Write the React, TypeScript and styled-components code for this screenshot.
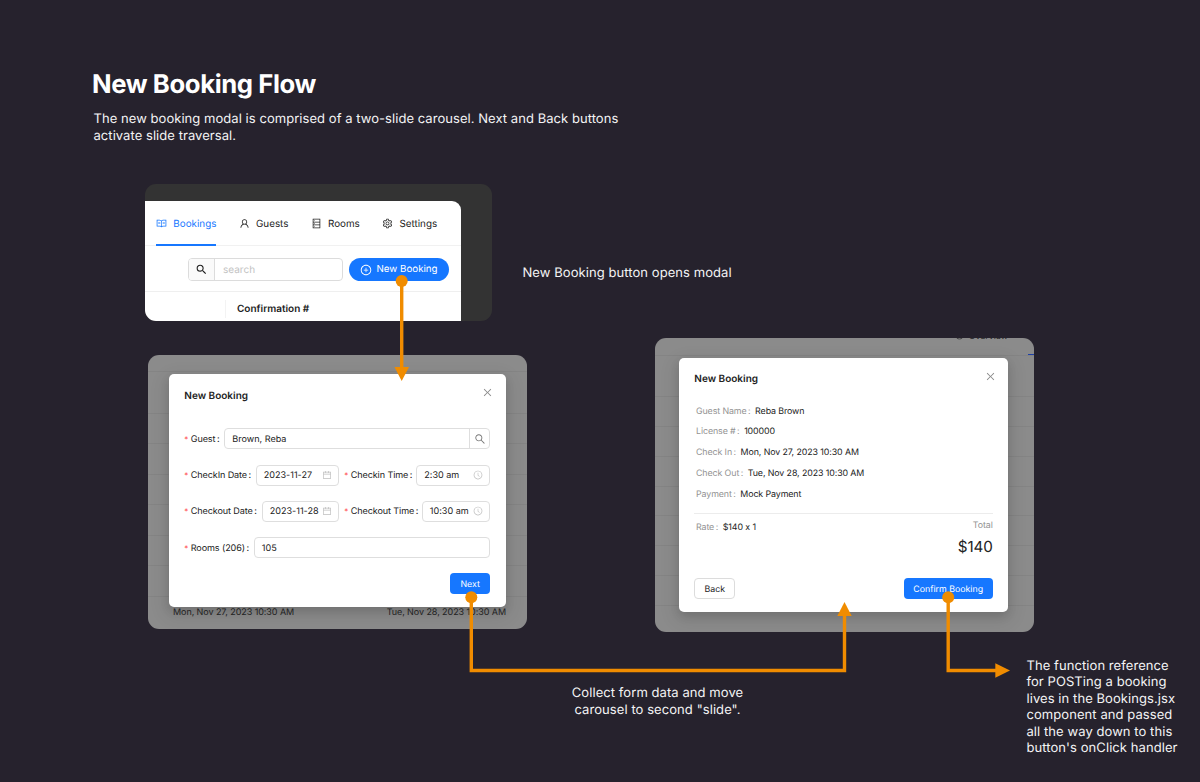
import React from "react";
import styled, { createGlobalStyle, css } from "styled-components";
import {
  AiOutlineRead,
  AiOutlineUser,
  AiOutlineDatabase,
  AiOutlineSetting,
  AiOutlinePlusCircle,
  AiOutlineSearch,
  AiOutlineClose,
  AiOutlineCalendar,
  AiOutlineClockCircle,
  AiOutlineEye,
} from "react-icons/ai";
import { MdSearch } from "react-icons/md";

const blue = "#1677ff";
const orange = "#f08c00";

const GlobalStyle = createGlobalStyle`
  body {
    margin: 0;
    background: #26222d;
    font-family: Inter, "Liberation Sans", sans-serif;
    font-feature-settings: "calt" 0;
    text-rendering: geometricPrecision;
  }
  * { box-sizing: border-box; }
  button { text-rendering: inherit; }
  svg { display: block; flex: none; }
`;

const Canvas = styled.main`
  position: relative;
  width: 1200px;
  height: 782px;
  overflow: hidden;
  background: #26222d;
  color: #fff;
`;

const Header = styled.header`
  padding: 67px 0 0 92px;
`;

const Title = styled.h1`
  margin: 0;
  font-size: 25.7px;
  line-height: 36px;
  font-weight: 700;
  letter-spacing: -0.4px;
`;

const Intro = styled.p`
  margin: 8px 0 0 1.5px;
  width: 540px;
  font-size: 13px;
  line-height: 16.5px;
  letter-spacing: 0.05px;
  color: #f4f4f5;
`;

/* Nodes placed on the flow board */
const Node = styled.section<{ $x: number; $y: number; $w: number; $h: number }>`
  position: absolute;
  left: ${(p) => p.$x}px;
  top: ${(p) => p.$y}px;
  width: ${(p) => p.$w}px;
  height: ${(p) => p.$h}px;
  border-radius: 11px;
  overflow: hidden;
`;

const Note = styled.p<{ $x: number; $y: number; $w: number; $center?: boolean }>`
  position: absolute;
  left: ${(p) => p.$x}px;
  top: ${(p) => p.$y}px;
  width: ${(p) => p.$w}px;
  margin: 0;
  font-size: 13px;
  line-height: 16.5px;
  letter-spacing: 0.07px;
  color: #f4f4f5;
  white-space: pre-line;
  text-align: ${(p) => (p.$center ? "center" : "left")};
`;

/* Toolbar node */
const ToolbarNode = styled(Node)`
  background: #333;
  padding-top: 17px;
`;

const Sheet = styled.div`
  width: 315.5px;
  height: 120px;
  background: #fff;
  border-top-right-radius: 9px;
  color: #222;
`;

const Tabs = styled.nav`
  display: flex;
  height: 45px;
  padding-left: 11px;
  gap: 22.3px;
  border-bottom: 1px solid #f1f1f1;
`;

const Tab = styled.div<{ $active?: boolean }>`
  display: flex;
  align-items: center;
  height: 45px;
  padding-top: 2px;
  gap: 6.3px;
  font-size: 9.85px;
  white-space: nowrap;
  color: ${(p) => (p.$active ? blue : "#222")};
  border-bottom: 2px solid ${(p) => (p.$active ? blue : "transparent")};
`;

const ActionBar = styled.div`
  display: flex;
  align-items: center;
  justify-content: flex-end;
  height: 46px;
  padding: 2px 11.5px 0 0;
  gap: 6px;
  border-bottom: 1px solid #efefef;
`;

const SearchBox = styled.div`
  display: flex;
  width: 155px;
  height: 23px;
  border: 1px solid #dcdcdc;
  border-radius: 4px;
  overflow: hidden;
  font-size: 10px;
  color: #c3c3c3;
`;

const SearchAddon = styled.span`
  display: flex;
  align-items: center;
  justify-content: center;
  width: 26px;
  background: #fafafa;
  border-right: 1px solid #dcdcdc;
  color: #222;
`;

const SearchHint = styled.span`
  padding-left: 8px;
  line-height: 22px;
`;

const PillButton = styled.button`
  display: flex;
  align-items: center;
  gap: 4.5px;
  width: 100px;
  height: 23px;
  padding: 0 0 0 11px;
  border: 0;
  border-radius: 12px;
  background: ${blue};
  color: #fff;
  font: 400 9.75px Inter, sans-serif;
  white-space: nowrap;
`;

const TableHead = styled.div`
  display: flex;
  height: 29px;
  align-items: center;
  padding-left: 80px;
  font-size: 10px;
  font-weight: 600;
`;

const HeadCell = styled.span`
  margin-top: 4.2px;
  padding-left: 11px;
  line-height: 18px;
  border-left: 1px solid #f3f3f3;
`;

/* Dimmed page seen behind each modal */
const Backdrop = styled(Node)`
  background: #8b8b8b;
  color: #262626;
`;

const DimRows = styled.div`
  display: flex;
  flex-direction: column;
`;

const DimRow = styled.div<{ $h: number }>`
  display: flex;
  justify-content: space-between;
  height: ${(p) => p.$h}px;
  border-bottom: 1px solid #848484;
`;

const DimFooter = styled.div`
  display: flex;
  justify-content: space-between;
  padding: 9.5px 21px 0 25px;
  font-size: 9px;
  line-height: 12px;
  letter-spacing: -0.07px;
`;

const DimNav = styled.div`
  display: flex;
  justify-content: flex-end;
  align-items: center;
  gap: 5px;
  width: 353px;
  height: 12px;
  margin-top: -8px;
  font-size: 8.8px;
  line-height: 12px;
`;

const DimNavText = styled.span`
  padding-top: 2px;
`;

const DimMarker = styled.i`
  align-self: flex-end;
  width: 6px;
  height: 1px;
  margin-left: auto;
  background: #1d3fa8;
`;

const Dialog = styled.div<{ $x: number; $y: number; $w: number; $h: number; $font: number; $track: number }>`
  position: absolute;
  left: ${(p) => p.$x}px;
  top: ${(p) => p.$y}px;
  width: ${(p) => p.$w}px;
  height: ${(p) => p.$h}px;
  display: flex;
  flex-direction: column;
  padding: 13px 15.3px 0;
  border-radius: 5px;
  background: #fff;
  color: #222;
  font-size: ${(p) => p.$font}px;
  letter-spacing: ${(p) => p.$track}px;
  box-shadow: 0 4px 10px rgba(0, 0, 0, 0.12), 0 6px 18px 4px rgba(0, 0, 0, 0.08);
`;

const DialogHead = styled.div`
  display: flex;
  justify-content: space-between;
  height: 16px;
  margin-right: -3px;
  color: #8a8a8a;
`;

const DialogTitle = styled.h2<{ $line: number }>`
  margin: 0;
  font-size: 10px;
  line-height: ${(p) => p.$line}px;
  font-weight: 600;
  letter-spacing: 0;
  color: #222;
`;

const Form = styled.div`
  display: flex;
  flex-direction: column;
  gap: 15.3px;
  margin-top: 25.3px;
`;

const FormRow = styled.div`
  display: flex;
  align-items: center;
  height: 21px;
`;

const Label = styled.label<{ $w: number }>`
  flex: none;
  width: ${(p) => p.$w}px;
  line-height: 12px;
  padding-top: 1px;
  white-space: nowrap;
  letter-spacing: -0.1px;
  &::before {
    content: "*";
    color: #ff4d4f;
    margin-right: 2.5px;
    font-size: 8px;
  }
`;

const Colon = styled.span`
  margin-left: 1.5px;
`;

const Field = styled.div<{ $w?: number }>`
  display: flex;
  align-items: center;
  justify-content: space-between;
  flex: ${(p) => (p.$w ? "none" : 1)};
  width: ${(p) => (p.$w ? `${p.$w}px` : "auto")};
  height: 21px;
  padding-left: 7px;
  padding-right: 6.5px;
  border: 1px solid #dedede;
  border-radius: 4px;
  white-space: nowrap;
  color: #222;
  svg { color: #bfbfbf; }
`;

const FieldValue = styled.span`
  line-height: 12px;
  padding-top: 1.8px;
`;

const SearchButton = styled.span`
  display: flex;
  align-items: center;
  justify-content: center;
  width: 20px;
  height: 19px;
  margin-right: -6.5px;
  border-left: 1px solid #dedede;
  svg { color: #777; }
`;

const Spacer = styled.span`
  width: 5px;
  flex: none;
`;

const Footer = styled.div<{ $top: number }>`
  display: flex;
  justify-content: space-between;
  margin-top: ${(p) => p.$top}px;
`;

const Button = styled.button<{ $primary?: boolean; $w: number }>`
  width: ${(p) => p.$w}px;
  height: 21px;
  padding: 1px 0 0;
  border-radius: 4px;
  font: 400 8.8px Inter, sans-serif;
  ${(p) =>
    p.$primary
      ? css`
          margin-left: auto;
          border: 0;
          background: ${blue};
          color: #fff;
        `
      : css`
          border: 1px solid #dcdcdc;
          background: #fff;
          color: #222;
        `}
`;

const Details = styled.dl`
  display: flex;
  flex-direction: column;
  margin: 13.5px 0 0;
  padding-left: 1.7px;
`;

const Detail = styled.div`
  display: flex;
  gap: 4.6px;
  height: 20.9px;
  line-height: 21px;
  white-space: nowrap;
`;

const Term = styled.dt`
  color: #929292;
`;

const Value = styled.dd`
  margin: 0;
`;

const Summary = styled.div`
  display: flex;
  justify-content: space-between;
  margin-top: 8px;
  padding: 3px 0 0 1.7px;
  border-top: 1px solid #ececec;
`;

const Total = styled.div`
  display: flex;
  flex-direction: column;
  align-items: flex-end;
  color: #929292;
  line-height: 18px;
`;

const Amount = styled.strong`
  font-size: 15.2px;
  line-height: 24px;
  font-weight: 400;
  color: #222;
`;

const Connectors = styled.svg`
  position: absolute;
  inset: 0;
`;

function DimTable({ rows }: { rows: number[] }) {
  return (
    <DimRows>
      {rows.map((h, i) => (
        <DimRow key={i} $h={h} />
      ))}
    </DimRows>
  );
}

const details: [string, string][] = [
  ["Guest Name", "Reba Brown"],
  ["License #", "100000"],
  ["Check In", "Mon, Nov 27, 2023 10:30 AM"],
  ["Check Out", "Tue, Nov 28, 2023 10:30 AM"],
  ["Payment", "Mock Payment"],
];

export default function App() {
  return (
    <Canvas>
      <GlobalStyle />
      <Header>
        <Title>New Booking Flow</Title>
        <Intro>
          The new booking modal is comprised of a two-slide carousel. Next and Back buttons
          activate slide traversal.
        </Intro>
      </Header>

      <ToolbarNode $x={145} $y={184} $w={347} $h={137}>
        <Sheet>
          <Tabs>
            <Tab $active><AiOutlineRead size={11} />Bookings</Tab>
            <Tab><AiOutlineUser size={11} />Guests</Tab>
            <Tab><AiOutlineDatabase size={11} />Rooms</Tab>
            <Tab><AiOutlineSetting size={11} />Settings</Tab>
          </Tabs>
          <ActionBar>
            <SearchBox>
              <SearchAddon><MdSearch size={13} /></SearchAddon>
              <SearchHint>search</SearchHint>
            </SearchBox>
            <PillButton><AiOutlinePlusCircle size={12} />New Booking</PillButton>
          </ActionBar>
          <TableHead><HeadCell>Confirmation #</HeadCell></TableHead>
        </Sheet>
      </ToolbarNode>

      <Note $x={522.5} $y={265} $w={260}>New Booking button opens modal</Note>

      <Backdrop $x={148} $y={355} $w={379} $h={274}>
        <DimTable rows={[17, 42, 30, 31, 30, 31, 30, 31]} />
        <DimFooter>
          <span>Mon, Nov 27, 2023 10:30 AM</span>
          <span>Tue, Nov 28, 2023 10:30 AM</span>
        </DimFooter>
        <Dialog $x={21} $y={19} $w={336.5} $h={233} $font={9.07} $track={0}>
          <DialogHead>
            <DialogTitle $line={18}>New Booking</DialogTitle>
            <AiOutlineClose size={11} />
          </DialogHead>
          <Form>
            <FormRow>
              <Label $w={40}>Guest<Colon>:</Colon></Label>
              <Field>
                <FieldValue>Brown, Reba</FieldValue>
                <SearchButton><AiOutlineSearch size={12} /></SearchButton>
              </Field>
            </FormRow>
            <FormRow>
              <Label $w={71.4}>CheckIn Date<Colon>:</Colon></Label>
              <Field $w={83.6}><FieldValue>2023-11-27</FieldValue><AiOutlineCalendar size={10} /></Field>
              <Spacer />
              <Label $w={72}>Checkin Time<Colon>:</Colon></Label>
              <Field><FieldValue>2:30 am</FieldValue><AiOutlineClockCircle size={10} /></Field>
            </FormRow>
            <FormRow>
              <Label $w={77.4}>Checkout Date<Colon>:</Colon></Label>
              <Field $w={77.6}><FieldValue>2023-11-28</FieldValue><AiOutlineCalendar size={10} /></Field>
              <Spacer />
              <Label $w={77.5}>Checkout Time<Colon>:</Colon></Label>
              <Field><FieldValue>10:30 am</FieldValue><AiOutlineClockCircle size={10} /></Field>
            </FormRow>
            <FormRow>
              <Label $w={69.5}>Rooms (206)<Colon>:</Colon></Label>
              <Field><FieldValue>105</FieldValue></Field>
            </FormRow>
          </Form>
          <Footer $top={15}>
            <Button $primary $w={40}>Next</Button>
          </Footer>
        </Dialog>
      </Backdrop>

      <Backdrop $x={655} $y={338} $w={379} $h={294}>
        <DimNav><AiOutlineEye size={9} /><DimNavText>Overview</DimNavText></DimNav>
        <DimRow $h={14}><DimMarker /></DimRow>
        <DimTable rows={[41, 30, 30, 30, 29, 30, 30, 30]} />
        <Dialog $x={24} $y={20} $w={329} $h={253.5} $font={8.86} $track={-0.1}>
          <DialogHead>
            <DialogTitle $line={16.5}>New Booking</DialogTitle>
            <AiOutlineClose size={11} />
          </DialogHead>
          <Details>
            {details.map(([term, value]) => (
              <Detail key={term}>
                <Term>{term}<Colon>:</Colon></Term>
                <Value>{value}</Value>
              </Detail>
            ))}
          </Details>
          <Summary>
            <Detail>
              <Term>Rate<Colon>:</Colon></Term>
              <Value>$140 x 1</Value>
            </Detail>
            <Total>
              Total
              <Amount>$140</Amount>
            </Total>
          </Summary>
          <Footer $top={19.4}>
            <Button $w={41}>Back</Button>
            <Button $primary $w={89}>Confirm Booking</Button>
          </Footer>
        </Dialog>
      </Backdrop>

      <Note $x={547} $y={685.4} $w={221} $center>
        {"Collect form data and move\ncarousel to second \"slide\"."}
      </Note>
      <Note $x={1026.5} $y={657.5} $w={172}>
        {"The function reference\nfor POSTing a booking\nlives in the Bookings.jsx\ncomponent and passed\nall the way down to this\nbutton's onClick handler"}
      </Note>

      <Connectors width="1200" height="782" viewBox="0 0 1200 782" fill="none">
        <g stroke={orange} strokeWidth="3.4">
          <path d="M401.7 281V369" />
          <path d="M471.3 597V670.5H844.5V614" />
          <path d="M948.2 597V670.5H997" />
        </g>
        <g fill={orange}>
          <circle cx="401.7" cy="281" r="6" />
          <circle cx="471.3" cy="597.3" r="6" />
          <circle cx="948.2" cy="597.3" r="6" />
          <path d="M394.5 367H409L401.7 381Z" />
          <path d="M837.3 616H851.7L844.5 602Z" />
          <path d="M995.3 663.3V677.7L1010 670.5Z" />
        </g>
      </Connectors>
    </Canvas>
  );
}
